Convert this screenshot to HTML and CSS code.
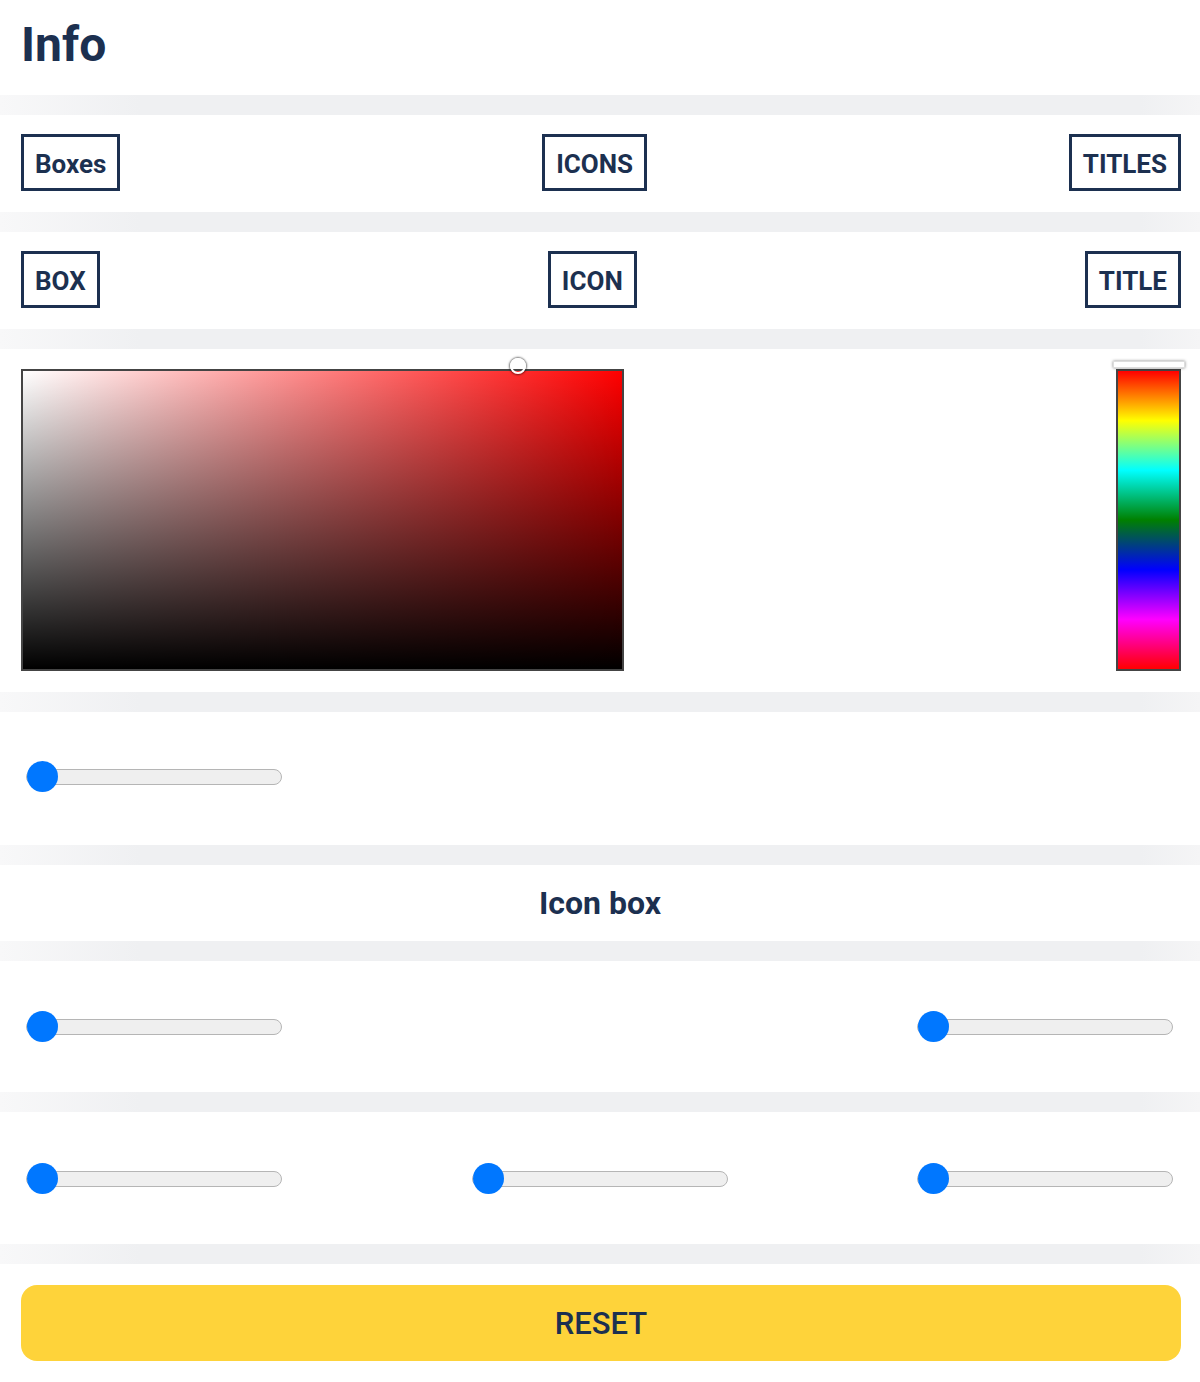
FILE: index.html
```html
<!DOCTYPE html>
<html lang="en">
<head>
    <meta charset="UTF-8">
    <meta name="viewport" content="width=device-width, initial-scale=1.0">
    <title>Info</title>
    <link rel="stylesheet" href="styles.css">
</head>
<body>

    <div class="panel head">
        <h1>Info</h1>
    </div>

    <div class="panel row">
        <button class="tab">Boxes</button>
        <button class="tab">ICONS</button>
        <button class="tab">TITLES</button>
    </div>

    <div class="panel row">
        <button class="tab">BOX</button>
        <button class="tab">ICON</button>
        <button class="tab">TITLE</button>
    </div>

    <div class="panel picker">
        <div class="sat">
            <span class="sat-handle"></span>
        </div>
        <div class="hue">
            <span class="hue-handle"></span>
        </div>
    </div>

    <div class="panel sliders s1">
        <input class="slider" type="range" min="0" max="100" value="0">
    </div>

    <div class="panel caption">Icon box</div>

    <div class="panel sliders s2">
        <input class="slider" type="range" min="0" max="100" value="0">
        <input class="slider" type="range" min="0" max="100" value="0">
    </div>

    <div class="panel sliders s3">
        <input class="slider" type="range" min="0" max="100" value="0">
        <input class="slider" type="range" min="0" max="100" value="0">
        <input class="slider" type="range" min="0" max="100" value="0">
    </div>

    <div class="panel last">
        <button class="reset">RESET</button>
    </div>

</body>
</html>
```

FILE: styles.css
```css
body {
    margin: 0;
    font-family: Roboto, "Liberation Sans", Arial, sans-serif;
    color: #1c3050;
    background: linear-gradient(to right, #f8f8f9, #eff0f2 140px, #eff0f2 calc(100% - 60px), #f5f5f6);
}

.panel {
    background: #fff;
    margin-bottom: 20px;
    box-sizing: border-box;
}

.head {
    padding: 16px 21px 21px;
}

.head h1 {
    margin: 0;
    font-size: 48px;
    line-height: 58px;
    font-weight: 700;
}

.row {
    display: flex;
    justify-content: space-between;
    align-items: center;
    padding: 19px 19px 21px 21px;
}

.tab {
    font-family: inherit;
    font-size: 26px;
    font-weight: 700;
    line-height: 31px;
    color: #1c3050;
    background: #fff;
    border: 3px solid #1c3050;
    padding: 12px 11px 8px;
    margin: 0;
    cursor: pointer;
}

.picker {
    display: flex;
    justify-content: space-between;
    padding: 20px 19px 21px 21px;
}

.sat {
    position: relative;
    width: 603px;
    height: 302px;
    box-sizing: border-box;
    border: 2px solid #444;
    background: linear-gradient(to top, #000, rgba(0, 0, 0, 0)), linear-gradient(to right, #fff, #f00);
}

.sat-handle {
    position: absolute;
    left: 487px;
    top: -13px;
    width: 16px;
    height: 16px;
    box-sizing: border-box;
    border: 2px solid #fff;
    border-radius: 50%;
    box-shadow: 0 0 2px 1px rgba(0, 0, 0, 0.55);
}

.hue {
    position: relative;
    width: 65px;
    height: 302px;
    box-sizing: border-box;
    border: 2px solid #444;
    background: linear-gradient(to bottom, red, yellow, aqua, green, blue, magenta, red);
}

.hue-handle {
    position: absolute;
    left: -5px;
    top: -10px;
    width: 72px;
    height: 7px;
    box-sizing: border-box;
    background: #fff;
    border: 1px solid #ddd;
    box-shadow: 0 0 3px rgba(0, 0, 0, 0.5);
}

.sliders {
    display: flex;
    justify-content: space-between;
    align-items: center;
    padding: 0 27px 0 26px;
}

.s1 { padding-top: 49px; padding-bottom: 53px; }
.s2 { padding-top: 50px; padding-bottom: 50px; }
.s3 { padding-top: 51px; padding-bottom: 50px; }

.slider {
    -webkit-appearance: none;
    appearance: none;
    width: 256px;
    height: 31px;
    margin: 0;
    background: transparent;
}

.slider::-webkit-slider-runnable-track {
    height: 16px;
    box-sizing: border-box;
    background: #efefef;
    border: 1px solid #b5b5b5;
    border-radius: 8px;
}

.slider::-webkit-slider-thumb {
    -webkit-appearance: none;
    width: 31px;
    height: 31px;
    margin-top: -8.5px;
    border: none;
    border-radius: 50%;
    background: #0077ff;
}

.caption {
    height: 76px;
    line-height: 76px;
    text-align: center;
    font-size: 32px;
    font-weight: 700;
}

.last {
    margin-bottom: 0;
    padding: 21px 19px 21px 21px;
}

.reset {
    display: block;
    width: 100%;
    height: 76px;
    font-family: inherit;
    font-size: 31px;
    font-weight: 500;
    color: #1c3050;
    background: #fed33a;
    border: none;
    border-radius: 16px;
    cursor: pointer;
}
```
